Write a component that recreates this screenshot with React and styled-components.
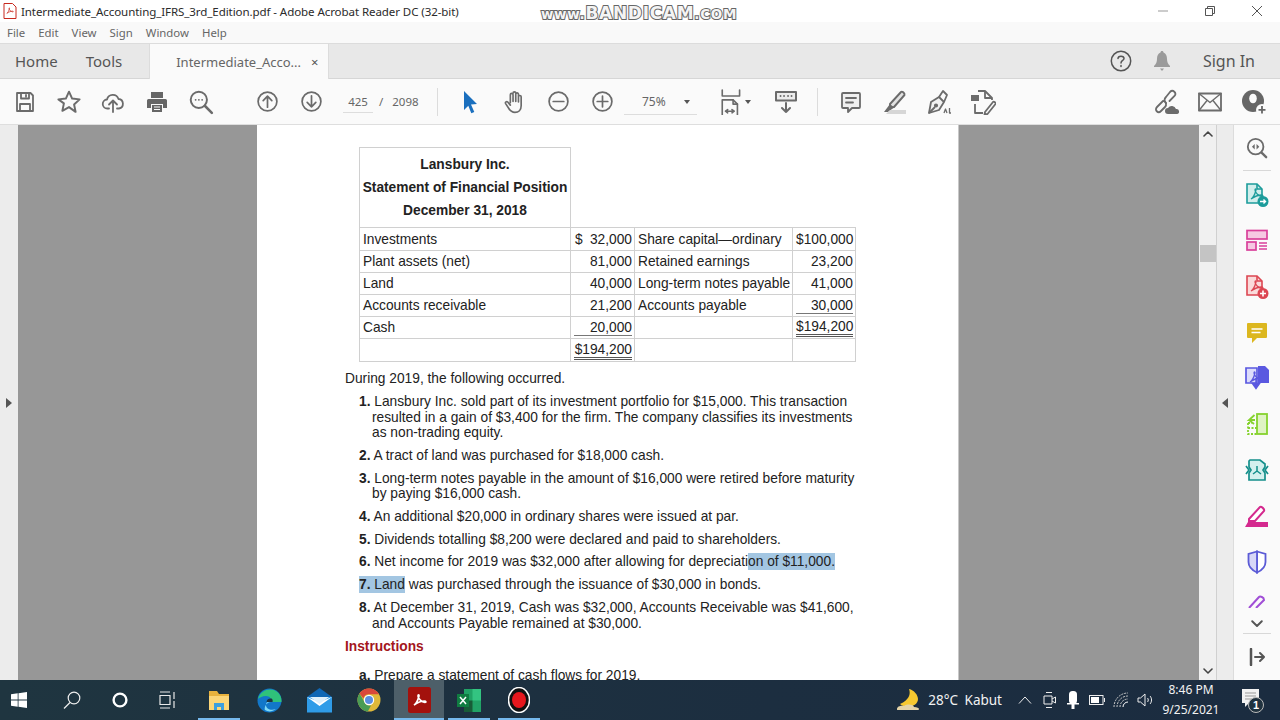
import React from "react";
import styled, { createGlobalStyle } from "styled-components";

const GlobalStyle = createGlobalStyle`
  html, body {
    margin: 0;
    padding: 0;
    background: #fff;
    overflow: hidden;
  }
  * { box-sizing: border-box; }
`;

const uiFont = `"Noto Sans", "Open Sans", sans-serif`;
const gray = "#6b6b6b";

const Window = styled.div`
  width: 1280px;
  height: 720px;
  display: flex;
  flex-direction: column;
  font-family: ${uiFont};
  overflow: hidden;
  position: relative;
`;

/* title bar */
const TitleBar = styled.div`
  height: 22px;
  flex: none;
  display: flex;
  align-items: center;
  padding-left: 3px;
  background: #fff;
  color: #2b2b2b;
  font-size: 11.55px;
`;
const TitleText = styled.span`
  margin-left: 4px;
  flex: 1;
  letter-spacing: -0.09px;
`;
const WinControl = styled.div`
  width: 47px;
  height: 22px;
  display: flex;
  align-items: center;
  justify-content: center;
`;
const Watermark = styled.div`
  position: absolute;
  left: 539px;
  top: 3px;
  width: 200px;
  text-align: center;
  font-family: "DejaVu Sans", sans-serif;
  font-weight: 700;
  font-size: 17px;
  line-height: 20px;
  letter-spacing: 0.7px;
  white-space: nowrap;
  color: #f4f4f4;
  -webkit-text-stroke: 2px #666;
  paint-order: stroke fill;
  small {
    font-size: 13.5px;
  }
`;

/* menu bar */
const MenuBar = styled.div`
  height: 21px;
  flex: none;
  display: flex;
  align-items: center;
  padding-left: 7px;
  gap: 13px;
  background: #f9f9f9;
  color: #666;
  font-size: 11.4px;
`;

/* tab strip */
const TabBar = styled.div`
  height: 36px;
  flex: none;
  display: flex;
  align-items: stretch;
  background: #e8e8e8;
  border-top: 1px solid #dcdcdc;
  border-bottom: 1px solid #d6d6d6;
`;
const NavTab = styled.div`
  display: flex;
  align-items: center;
  font-size: 15px;
  color: #555;
  margin-left: ${(p) => p.$left}px;
`;
const DocTab = styled.div`
  width: 180px;
  margin-left: 27px;
  margin-bottom: -1px;
  padding-left: 26px;
  display: flex;
  align-items: center;
  background: #fafafa;
  border-left: 1px solid #dcdcdc;
  border-right: 1px solid #dcdcdc;
  font-size: 13px;
  color: #666;
`;
const TabClose = styled.span`
  margin-left: 10px;
  font-size: 13px;
  color: #555;
`;
const TabRight = styled.div`
  margin-left: auto;
  display: flex;
  align-items: center;
  padding-right: 25px;
`;
const SignIn = styled.span`
  margin-left: 32px;
  font-size: 16px;
  color: #555;
`;

/* toolbar */
const ToolBar = styled.div`
  height: 46px;
  flex: none;
  display: flex;
  align-items: center;
  padding-left: 3px;
  background: #fafafa;
  border-bottom: 1px solid #dedede;
`;
const ToolSlot = styled.div`
  width: ${(p) => p.$w || 44}px;
  flex: none;
  display: flex;
  align-items: center;
  justify-content: center;
`;
const Gap = styled.div`
  width: ${(p) => p.$w}px;
  flex: none;
`;
const ToolSep = styled.div`
  width: 1px;
  height: 28px;
  flex: none;
  background: #dcdcdc;
`;
const PageBox = styled.div`
  width: 104px;
  flex: none;
  display: flex;
  align-items: center;
  font-size: 11.5px;
  color: #666;
`;
const PageNum = styled.span`
  width: 30px;
  margin-left: 10px;
  padding: 4px 0 3px;
  text-align: center;
  border-bottom: 1px solid #ddd;
`;
const PageTotal = styled.span`
  margin-left: 6px;
  word-spacing: 6px;
`;
const ZoomBox = styled.div`
  width: 73px;
  flex: none;
  display: flex;
  align-items: center;
  justify-content: space-between;
  padding: 4px 7px 4px 18px;
  margin-top: 1px;
  font-size: 12px;
  color: #666;
  border-bottom: 1px solid #ddd;
`;
const Caret = styled.span`
  width: 0;
  height: 0;
  border-left: 3.5px solid transparent;
  border-right: 3.5px solid transparent;
  border-top: 4px solid #555;
`;
const ToolRight = styled.div`
  margin-left: auto;
  display: flex;
  padding-right: 4px;
`;

/* main area */
const Main = styled.div`
  flex: 1;
  min-height: 0;
  display: flex;
  overflow: hidden;
`;
const SideStrip = styled.div`
  width: ${(p) => p.$w}px;
  flex: none;
  display: flex;
  align-items: center;
  justify-content: center;
  background: #ececec;
  border-left: ${(p) => (p.$edge ? "1px solid #d0d0d0" : "none")};
`;
const Arrow = styled.span`
  width: 0;
  height: 0;
  border-top: 5px solid transparent;
  border-bottom: 5px solid transparent;
  ${(p) =>
    p.$dir === "right"
      ? "border-left: 6px solid #555;"
      : "border-right: 6px solid #555;"}
`;
const Canvas = styled.div`
  flex: 1;
  display: flex;
  justify-content: center;
  background: #979797;
  padding-right: 2px;
`;
const Page = styled.div`
  width: 701px;
  background: #fff;
  padding: 22px 0 0 88px;
  font-family: "Liberation Sans", Arial, sans-serif;
  font-size: 13.75px;
  color: #222;
  box-shadow: 1px 0 0 #c8c8c8;
`;

const SheetTable = styled.table`
  margin-left: 14px;
  width: 496px;
  table-layout: fixed;
  border-collapse: collapse;
`;
const Td = styled.td`
  height: ${(p) => (p.$tall ? 23 : 22)}px;
  padding: 0 2px 0 3px;
  border: 1.5px solid #d0d0d0;
  text-align: ${(p) => (p.$num ? "right" : "left")};
  white-space: nowrap;
`;
const HeadCell = styled.td`
  height: 80px;
  padding: 0;
  border: 1.5px solid #d0d0d0;
  text-align: center;
  font-weight: 700;
  line-height: 23px;
  white-space: nowrap;
`;
const BlankCell = styled.td`
  padding: 0;
`;
const Figure = styled.span`
  display: block;
  line-height: 15px;
  margin-top: 1px;
  border-bottom: ${(p) =>
    p.$rule === "double"
      ? "3px double #555"
      : p.$rule === "single"
      ? "1px solid #777"
      : "none"};
`;
const SpreadFigure = styled.span`
  display: flex;
  justify-content: space-between;
  padding-left: 1px;
`;

const Lead = styled.p`
  margin: 9px 0 7px;
  line-height: 16px;
`;
const Items = styled.ol`
  list-style: none;
  margin: 0;
  padding: 0 0 0 14px;
`;
const Item = styled.li`
  margin-bottom: 7.3px;
  padding-left: 13px;
  text-indent: -13px;
  line-height: 15.5px;
  white-space: nowrap;
  b {
    font-weight: 700;
  }
`;
const Mark = styled.span`
  background: #a3c6e2;
  padding: 1px 0;
`;
const SectionHead = styled.h4`
  margin: 8px 0 13px;
  font-size: 13.75px;
  line-height: 16px;
  font-weight: 700;
  color: #a3161c;
`;

/* scrollbar */
const Scrollbar = styled.div`
  width: 17px;
  flex: none;
  display: flex;
  flex-direction: column;
  align-items: center;
  background: #f0f0f0;
  padding: 5px 0;
`;
const Thumb = styled.div`
  width: 16px;
  height: 17px;
  margin-top: 108px;
  background: #c4c4c4;
`;
const ScrollEnd = styled.div`
  margin-top: auto;
  display: flex;
`;

/* right hand tools */
const ToolsPane = styled.div`
  width: 47px;
  flex: none;
  display: flex;
  flex-direction: column;
  align-items: center;
  padding-top: 12px;
  background: #fafafa;
  border-left: 1px solid #dcdcdc;
`;
const PaneIcon = styled.div`
  height: ${(p) => p.$h || 46}px;
  flex: none;
  display: flex;
  align-items: ${(p) => p.$align || "center"};
  padding-bottom: ${(p) => p.$pad || 0}px;
  overflow: hidden;
`;
const PaneSep = styled.div`
  width: 28px;
  height: 1px;
  flex: none;
  background: #d8d8d8;
  margin: ${(p) => p.$m};
`;

/* taskbar */
const Taskbar = styled.div`
  height: 40px;
  flex: none;
  display: flex;
  align-items: stretch;
  background: linear-gradient(90deg, #1f3540, #1c2e40 60%, #1b2c40);
  color: #f2f2f2;
`;
const TaskSlot = styled.div`
  width: ${(p) => p.$w || 50}px;
  flex: none;
  display: flex;
  align-items: center;
  justify-content: center;
  position: relative;
  background: ${(p) => (p.$active ? "#4d5f69" : "transparent")};
  &::after {
    content: "";
    display: ${(p) => (p.$running ? "block" : "none")};
    position: absolute;
    left: ${(p) => (p.$active ? 0 : 4)}px;
    right: ${(p) => (p.$active ? 0 : 4)}px;
    bottom: 0;
    height: 2px;
    background: #76b9ed;
  }
`;
const Tray = styled.div`
  margin-left: auto;
  display: flex;
  align-items: center;
`;
const Weather = styled.span`
  margin: 0 11px 0 8px;
  font-size: 13.5px;
  word-spacing: 3px;
`;
const TrayIcon = styled.div`
  width: 24px;
  display: flex;
  justify-content: center;
`;
const Clock = styled.div`
  width: 68px;
  text-align: center;
  font-size: 12px;
  line-height: 20px;
`;
const Notify = styled.div`
  width: 55px;
  display: flex;
  justify-content: center;
`;

/* icons */
const Svg = ({ s = 24, w, h, vb = "0 0 24 24", children, stroke = gray, sw = 1.8, fill = "none" }) => (
  <svg
    width={w || s}
    height={h || s}
    viewBox={vb}
    fill={fill}
    stroke={stroke}
    strokeWidth={sw}
    strokeLinecap="round"
    strokeLinejoin="round"
  >
    {children}
  </svg>
);

const PdfGlyph = ({ color = "#c8281e", sw = 1.3 }) => (
  <path
    d="M6 17c2-1 4-5 5-9 .2-1.500-1-1.500-1 0 0 3 4 6 7 6.500 1.500 0 1-1.500-.5-1.500-3 0-7 1.500-10.500 4z"
    stroke={color}
    strokeWidth={sw}
    fill="none"
  />
);

const AppIcon = () => (
  <svg width="14" height="16" viewBox="0 0 14 16">
    <path d="M1 .5h8.500L13 4v11.500H1z" fill="#fff" stroke="#c8281e" />
    <g transform="translate(0.500 1) scale(.55)">
      <PdfGlyph />
    </g>
  </svg>
);

const SaveIcon = () => (
  <Svg>
    <path d="M4 3h13.500L20 5.500V21H4z" />
    <path d="M8 3v5.500h8V3M13 5v1.500M7 21v-7h10v7" />
  </Svg>
);
const StarIcon = () => (
  <Svg s={26}>
    <path d="M12 2.500l2.900 6.300 6.900.8-5.100 4.700 1.400 6.800L12 16.700l-6.100 3.400 1.400-6.800L2.200 9.600l6.900-.8z" />
  </Svg>
);
const CloudIcon = () => (
  <Svg>
    <path d="M8 18.500H6.500A4.500 4.500 0 0 1 6 9.500 6 6 0 0 1 17.500 9 4.800 4.800 0 0 1 18 18.500h-2" />
    <path d="M12 22v-11M8 14.500l4-4 4 4" />
  </Svg>
);
const PrintIcon = () => (
  <svg width="24" height="24" viewBox="0 0 24 24" fill="#666">
    <path d="M6 2h12v6H6zM3.500 9h17A1.500 1.500 0 0 1 22 10.500V18h-4v-4H6v4H2v-7.500A1.500 1.500 0 0 1 3.500 9z" />
    <path d="M7 15h10v7H7z" />
    <path d="M9 17h6M9 19.500h6" stroke="#fafafa" strokeWidth="1" />
  </svg>
);
const FindIcon = () => (
  <Svg s={26}>
    <circle cx="10" cy="10" r="7.500" />
    <path d="M15.500 15.500l6.500 6.500" strokeWidth="2.400" />
    <path d="M7 10h.1M10 10h.1M13 10h.1" strokeWidth="1.600" />
  </Svg>
);
const CircleArrow = ({ up }) => (
  <Svg s={23}>
    <circle cx="12" cy="12" r="9.800" />
    <path d={up ? "M12 18V6.500M7.500 11L12 6.500l4.500 4.500" : "M12 6v11.500M7.500 13l4.500 4.500 4.500-4.500"} />
  </Svg>
);
const CursorIcon = () => (
  <svg width="24" height="26" viewBox="0 0 24 26" fill="#1a6fbe">
    <path d="M6 2l13 13-6 .6 3.300 7.400-3 1.300-3-7.500L6 21z" />
  </svg>
);
const HandIcon = () => (
  <Svg s={25} sw={1.6}>
    <path d="M8 13V5.500a1.300 1.300 0 0 1 2.600 0V12m0-8a1.300 1.300 0 0 1 2.600 0v8m0-7a1.300 1.300 0 0 1 2.600 0v7.500m0-5a1.300 1.300 0 0 1 2.600 0V16c0 4-2.500 6.500-6 6.500-3 0-4.500-1.500-6-4L3.500 14c-.8-1.500 1-2.500 2-1.500L8 15.500" />
  </Svg>
);
const CircleSign = ({ plus }) => (
  <Svg s={23}>
    <circle cx="12" cy="12" r="9.800" />
    <path d={plus ? "M6.500 12h11M12 6.500v11" : "M6.500 12h11"} />
  </Svg>
);
const FitIcon = () => (
  <Svg s={26} sw={1.5}>
    <path d="M3 1v5.500h16V1" />
    <path d="M3 24v-14h10l4 4v10" />
    <path d="M13 10v4h4M6 20.500h8M6 20.500l2-1.500M6 20.500L8 22M14 20.500L12 19M14 20.500L12 22" />
  </Svg>
);
const ReadIcon = () => (
  <svg width="22" height="22" viewBox="0 0 22 22" fill="none" stroke={gray} strokeLinecap="round" strokeLinejoin="round">
    <rect x="1" y="1" width="20" height="8.500" fill="#ececec" strokeWidth="2" />
    <path d="M5.500 5h.1M9 5h.1M13 5h.1M16.500 5h.1" strokeWidth="1.800" />
    <path d="M11 12v9M7 17l4 4 4-4" strokeWidth="2" />
  </svg>
);
const CommentIcon = () => (
  <Svg>
    <path d="M4 3h16a1 1 0 0 1 1 1v13a1 1 0 0 1-1 1h-7l-4 4v-4H4a1 1 0 0 1-1-1V4a1 1 0 0 1 1-1z" fill="#f0f0f0" />
    <path d="M7 8h10M7 12.500h7" />
  </Svg>
);
const HighlightIcon = () => (
  <svg width="26" height="26" viewBox="0 0 26 26" fill="none">
    <path d="M8 15L19 3c1-1 4 1 3.500 3L12 18l-4 .5z" fill="#e2e2e2" stroke={gray} strokeWidth="1.900" strokeLinejoin="round" />
    <path d="M8 15l4 3.500L6 23H2z" fill={gray} />
    <path d="M8 21h16v4H4z" fill="#d6d6d6" />
  </svg>
);
const SignIcon = () => (
  <svg width="26" height="26" viewBox="0 0 26 26" fill="none" stroke={gray} strokeWidth="1.800" strokeLinejoin="round">
    <path d="M3 24l2-11 8-5 5 5-5 8z" fill="#f2f2f2" />
    <path d="M3 24l6-6M13 8l4-6 4 4-3 7" />
    <circle cx="10" cy="16.500" r="1.200" fill={gray} />
    <path d="M18 24l1.500-4 1.500 4M23.500 19v5h1.500" strokeWidth="1.300" />
  </svg>
);
const EditDocIcon = () => (
  <svg width="26" height="26" viewBox="0 0 26 26" fill="none" stroke={gray} strokeWidth="1.800" strokeLinejoin="round">
    <path d="M8 2h7l7 7v2M5 15v9h8" />
    <path d="M15 2v7h7" />
    <path d="M1 6h8v6H1z" fill={gray} stroke="none" />
    <path d="M15 23l8-10c1-1 3 1 2.500 2L17.500 25l-3 .5z" />
  </svg>
);
const LinkCloudIcon = () => (
  <svg width="27" height="26" viewBox="0 0 27 26" fill="none" stroke={gray} strokeWidth="1.800" strokeLinecap="round">
    <path d="M10 12l-6 6c-3 3 1 7 4 4l4-4c2-2 1-5-1-6" />
    <path d="M13 14c-2-2-2-4 0-6l4-5c3-3 7 1 4.500 4l-5 5" />
    <path d="M15 25a3 3 0 0 1 0-6 4.500 4.500 0 0 1 8 1 2.500 2.500 0 0 1 1 5z" fill={gray} stroke="none" />
  </svg>
);
const MailIcon = () => (
  <Svg w={24} h={20} vb="0 0 24 20" sw={1.8}>
    <rect x="1" y="1.500" width="22" height="17" />
    <path d="M1 1.500l11 9 11-9M1 18.500l8-10M23 18.500l-8-10" strokeWidth="1.400" />
  </Svg>
);
const AddUserIcon = () => (
  <svg width="26" height="26" viewBox="0 0 26 26" fill="none">
    <circle cx="12" cy="12" r="11" fill="#666" />
    <ellipse cx="12" cy="9.500" rx="3.800" ry="4.800" fill="#fafafa" />
    <circle cx="21" cy="21" r="6" fill="#fafafa" />
    <path d="M21 17v7.500M17.500 20.800h7" stroke="#666" strokeWidth="1.800" />
  </svg>
);
const HelpIcon = () => (
  <svg width="22" height="22" viewBox="0 0 22 22" fill="none" stroke="#555" strokeWidth="1.500">
    <circle cx="11" cy="11" r="9.700" />
    <path d="M8 8.500C8 5.500 14 5.500 14 8.500c0 2-3 2-3 4.500M11 15.500v1" strokeLinecap="round" />
  </svg>
);
const BellIcon = () => (
  <svg width="18" height="20" viewBox="0 0 18 20" fill="#9a9a9a">
    <path d="M9 0c1 0 1.500.7 1.500 1.500C13 2.500 14 5 14 8c0 3 1 5 3 7v1H1v-1c2-2 3-4 3-7 0-3 1-5.500 3.500-6.500C7.500.7 8 0 9 0z" />
    <path d="M7 17.500h4L9 20z" />
  </svg>
);

const Chevron = ({ up, s = 10, color = "#444", sw = 1.6 }) => (
  <svg width={s} height={s * 0.7} viewBox="0 0 10 7" fill="none" stroke={color} strokeWidth={sw} strokeLinecap="round" strokeLinejoin="round">
    <path d={up ? "M1 6l4-4 4 4" : "M1 1l4 4 4-4"} />
  </svg>
);

const PaneFind = () => (
  <Svg sw={2}>
    <circle cx="10.500" cy="10.500" r="8.500" />
    <path d="M17 17l5 5" strokeWidth="2.500" />
    <path d="M9.500 7.500l-3 3 3 3zM11.500 7.500l3 3-3 3z" fill={gray} stroke="none" />
  </Svg>
);
const CreateIcon = () => (
  <svg width="24" height="26" viewBox="0 0 24 26" fill="none">
    <path d="M2 2h10l5 5v14H2z" fill="#d2eeec" stroke="#1c9c9b" strokeWidth="1.600" />
    <path d="M12 2v5h5" stroke="#1c9c9b" strokeWidth="1.600" />
    <PdfGlyph color="#1c9c9b" />
    <circle cx="18" cy="19.500" r="5.500" fill="#1c9c9b" />
    <path d="M15 19.500h5.500M18.500 17.500l2 2-2 2" stroke="#fff" strokeWidth="1.400" />
  </svg>
);
const OrganizeIcon = () => (
  <svg width="24" height="24" viewBox="0 0 24 24" fill="none" stroke="#d9409a" strokeWidth="1.700">
    <rect x="2" y="2.500" width="20" height="8.500" fill="#f6c8e2" />
    <rect x="2" y="14" width="9" height="8" fill="#f6c8e2" />
    <path d="M14 15h8M14 18h8M14 21h8" strokeWidth="1.300" />
  </svg>
);
const CombineIcon = () => (
  <svg width="24" height="26" viewBox="0 0 24 26" fill="none">
    <path d="M2 2h10l5 5v14H2z" fill="#fadada" stroke="#dc4652" strokeWidth="1.600" />
    <path d="M12 2v5h5" stroke="#dc4652" strokeWidth="1.600" />
    <PdfGlyph color="#dc4652" />
    <circle cx="18" cy="19.500" r="5.500" fill="#dc4652" />
    <path d="M15 19.500h6M18 16.500v6" stroke="#fff" strokeWidth="1.600" />
  </svg>
);
const PaneComment = () => (
  <svg width="22" height="22" viewBox="0 0 22 22">
    <path d="M2 1h18a1 1 0 0 1 1 1v13a1 1 0 0 1-1 1H11l-5 5v-5H2a1 1 0 0 1-1-1V2a1 1 0 0 1 1-1z" fill="#dcb71f" />
    <path d="M5.500 7h11M5.500 10.500h9" stroke="#fff" strokeWidth="1.500" />
  </svg>
);
const ExportIcon = () => (
  <svg width="26" height="26" viewBox="0 0 26 26" fill="none">
    <path d="M2 3h11v15H2z" fill="#dcdcfb" stroke="#5a58e0" strokeWidth="1.700" />
    <PdfGlyph color="#5a58e0" />
    <path d="M14 1h7l4 4v13H14z" fill="#5a58e0" />
    <path d="M12 13v8M8.500 18.500l3.500 5 3.500-5z" fill="#5a58e0" stroke="#5a58e0" strokeWidth="1.500" />
  </svg>
);
const CompareIcon = () => (
  <svg width="24" height="24" viewBox="0 0 24 24" fill="none" stroke="#86d22e" strokeWidth="1.800">
    <rect x="12" y="2" width="10" height="20" fill="#dff3c4" />
    <path d="M3 11v11h9M3 16h9M3 11h4" strokeDasharray="2 1.500" />
    <path d="M9.500 3L4 8h6M4 8l5 4" strokeWidth="1.800" />
  </svg>
);
const CompressIcon = () => (
  <svg width="26" height="24" viewBox="0 0 26 24" fill="none" stroke="#148f8b" strokeWidth="1.700">
    <path d="M6 2h10l5 4v3l-2 3 2 3v7H5v-7l2-3-2-3V3z" fill="#d3f0ee" />
    <path d="M2 8l3 4-3 4M24 8l-3 4 3 4" />
    <path d="M13 8v5M13 13l-4 3M13 13l4 3" strokeWidth="1.500" />
  </svg>
);
const RedactIcon = () => (
  <svg width="24" height="22" viewBox="0 0 24 22" fill="none">
    <path d="M4 14L15 2c1-1 5 2 4 4L10 16H4z" fill="#fff" stroke="#d4298e" strokeWidth="2" />
    <path d="M3 17h20v5H0z" fill="#d4298e" />
  </svg>
);
const ShieldIcon = () => (
  <svg width="20" height="24" viewBox="0 0 20 24">
    <path d="M10 1.500L18.500 4v8c0 5-4 8.500-8.500 10.500z" fill="#fff" stroke="#5b5bd6" strokeWidth="1.800" />
    <path d="M10 1.500L1.500 4v8c0 5 4 8.500 8.500 10.500z" fill="#d7d7f7" stroke="#5b5bd6" strokeWidth="1.800" />
  </svg>
);
const PurplePen = () => (
  <svg width="18" height="14" viewBox="0 0 18 14" fill="none" stroke="#a04ed6" strokeWidth="2">
    <path d="M1 14L11 3c1-1 5 0 5 3L8 14" />
  </svg>
);
const CollapseIcon = () => (
  <svg width="16" height="18" viewBox="0 0 16 18" fill="none" stroke="#555" strokeWidth="2" strokeLinecap="round">
    <path d="M2 1v16" strokeWidth="2.500" />
    <path d="M6 9h9M11 5l4 4-4 4" />
  </svg>
);

const StartIcon = () => (
  <svg width="16" height="16" viewBox="0 0 16 16" fill="#fff">
    <path d="M0 2.300L6.700 1.300V7.600H0zM7.500 1.200L16 0V7.600H7.500zM0 8.400H6.700V14.700L0 13.700zM7.500 8.400H16V16L7.500 14.800z" />
  </svg>
);
const SearchIcon = () => (
  <svg width="18" height="18" viewBox="0 0 18 18" fill="none" stroke="#eee" strokeWidth="1.200">
    <circle cx="11" cy="7" r="5.800" />
    <path d="M7 11.500L1 17.500" />
  </svg>
);
const CortanaIcon = () => (
  <svg width="16" height="16" viewBox="0 0 16 16" fill="none" stroke="#fff" strokeWidth="2.400">
    <circle cx="8" cy="8" r="6.400" />
  </svg>
);
const TaskViewIcon = () => (
  <svg width="18" height="18" viewBox="0 0 18 18" fill="none" stroke="#e8e8e8" strokeWidth="1.200">
    <path d="M1 1h10M1 17h10M1 4.500h10v9H1zM15 1v7M15 10v7" />
  </svg>
);
const ExplorerIcon = () => (
  <svg width="22" height="21" viewBox="0 0 22 21">
    <path d="M1 1h8l2 3h10v16H1z" fill="#e8b23d" />
    <path d="M1 6h20v14H1z" fill="#fcd678" />
    <path d="M6 20v-7h10v7h-3v-3H9v3z" fill="#3c9fdf" />
  </svg>
);
const EdgeIcon = () => (
  <svg width="25" height="25" viewBox="0 0 25 25">
    <circle cx="12.500" cy="12.500" r="12" fill="#1277c9" />
    <path d="M1 11C3 3 11 0 17 2c5 2 8 7 7.500 12H14c1-3-1-6-5-6-4 0-7 2-8 3z" fill="#2fc27a" />
    <path d="M15 14c-3 0-6-1-6 3 0 4 5 6 10 4-4 3-8 3-11 1-1-1 .5-9 7-8z" fill="#7fd9f6" />
    <path d="M9.500 14c0-2 2-4 5-3.500 1 .5 1.500 2 1 3.500z" fill="#1f3540" />
  </svg>
);
const MailAppIcon = () => (
  <svg width="25" height="25" viewBox="0 0 25 25">
    <path d="M12.500 0L25 9v15H0V9z" fill="#0f67b5" />
    <path d="M0 9h25v15.500H0z" fill="#2f9ce8" />
    <path d="M0 9l12.500 9L25 9v0L12.500 14z" fill="#fff" />
    <path d="M3 9L12.500 16 22 9z" fill="#dff0fb" />
  </svg>
);
const ChromeIcon = () => (
  <svg width="24" height="24" viewBox="0 0 24 24">
    <circle cx="12" cy="12" r="11.500" fill="#e0b93a" />
    <path d="M12 .5a11.500 11.500 0 0 1 10 5.800H12a5.700 5.700 0 0 0-5.600 4.300L2.500 5.500A11.500 11.500 0 0 1 12 .5z" fill="#d9483b" />
    <path d="M2.500 5.500l5 8.500a5.700 5.700 0 0 0 6.500 3.400l-3.200 6.100A11.500 11.500 0 0 1 2.500 5.500z" fill="#4a9c55" />
    <circle cx="12" cy="12" r="5.200" fill="#fff" />
    <circle cx="12" cy="12" r="4" fill="#5b8fe0" />
  </svg>
);
const AcrobatIcon = () => (
  <svg width="23" height="26" viewBox="0 0 23 26">
    <rect width="23" height="26" rx="2.500" fill="#a3110d" />
    <g transform="translate(0 1)">
      <PdfGlyph color="#fff" sw={1.700} />
    </g>
  </svg>
);
const ExcelIcon = () => (
  <svg width="24" height="23" viewBox="0 0 24 23">
    <path d="M7 0h17v23H7z" fill="#21a366" />
    <path d="M15.500 0H24v11.500h-8.500z" fill="#33c481" />
    <path d="M7 11.500h8.500V23H7z" fill="#185c37" />
    <path d="M0 5h12v13H0z" fill="#107c41" />
    <path d="M3 8l6 7M9 8l-6 7" stroke="#fff" strokeWidth="1.500" />
  </svg>
);
const RecordIcon = () => (
  <svg width="22" height="26" viewBox="0 0 22 26">
    <ellipse cx="11" cy="13" rx="10.500" ry="12.500" fill="#111" stroke="#fff" strokeWidth="1.500" />
    <ellipse cx="11" cy="13" rx="7" ry="8" fill="#e6171d" />
  </svg>
);
const MoonIcon = () => (
  <svg width="24" height="24" viewBox="0 0 24 24">
    <path d="M13 1c2 5 0 11-9 15 5 5 18 3 18-5 0-4-4-9-9-10z" fill="#f6c830" />
    <path d="M1 21c0-3 5-4 7-3 3-2 9-2 10 1 3 0 5 1 5 2 0 1-1 1-2 1H2c-1 0-1 0-1-1z" fill="#e5d4a8" />
  </svg>
);
const ChevUpIcon = () => (
  <svg width="14" height="8" viewBox="0 0 14 8" fill="none" stroke="#eee" strokeWidth="1">
    <path d="M1 7.500L7 1l6 6.500" />
  </svg>
);
const MeetIcon = () => (
  <svg width="13" height="16" viewBox="0 0 13 16" fill="none" stroke="#eee" strokeWidth="1">
    <path d="M3 .5h6M3 15.500h6M1 4h8v8H1zM9 7l3.500-2v6L9 9" />
  </svg>
);
const MicIcon = () => (
  <svg width="12" height="18" viewBox="0 0 12 18" fill="#fff">
    <rect x="2" y="0" width="8" height="13" rx="3.500" />
    <path d="M0 12h12v1.500H7.500V18h-3v-4.500H0z" />
  </svg>
);
const BatteryIcon = () => (
  <svg width="16" height="10" viewBox="0 0 16 10" fill="none" stroke="#eee">
    <rect x=".5" y=".5" width="13.500" height="9" />
    <rect x="2" y="2" width="8" height="6" fill="#fff" stroke="none" />
    <path d="M15.500 3v4" />
  </svg>
);
const WifiIcon = () => (
  <svg width="16" height="16" viewBox="0 0 16 16" fill="none" stroke="#ccc" strokeWidth="1">
    <path d="M1 15A14 14 0 0 1 15 1M4 15A11 11 0 0 1 15 4M7 15a8 8 0 0 1 8-8" strokeDasharray="2 1" />
    <path d="M10 15a5 5 0 0 1 5-5" stroke="#fff" />
  </svg>
);
const VolumeIcon = () => (
  <svg width="16" height="14" viewBox="0 0 16 14" fill="none" stroke="#eee" strokeWidth="1">
    <path d="M1 5h2.500L8 1v12L3.500 9H1zM10.500 5c1 1 1 3 0 4M13 3c2 2 2 6 0 8" />
  </svg>
);
const NotifyIcon = () => (
  <svg width="26" height="26" viewBox="0 0 26 26">
    <path d="M2 2h17v14H9l-4 4v-4H2z" fill="#f2f2f2" />
    <path d="M5 6h11M5 9h11M5 12h8" stroke="#999" />
    <circle cx="16" cy="18" r="7.500" fill="#20323f" stroke="#bbb" />
    <text x="16" y="22" fontSize="11" fontWeight="700" fill="#fff" textAnchor="middle" fontFamily="Liberation Sans, sans-serif">1</text>
  </svg>
);

const sheetRows = [
  ["Investments", <SpreadFigure><span>$</span><span>32,000</span></SpreadFigure>, "Share capital—ordinary", "$100,000"],
  ["Plant assets (net)", "81,000", "Retained earnings", "23,200"],
  ["Land", "40,000", "Long-term notes payable", "41,000"],
  ["Accounts receivable", "21,200", "Accounts payable", <Figure $rule="single">30,000</Figure>],
  ["Cash", <Figure $rule="single">20,000</Figure>, "", <Figure $rule="double">$194,200</Figure>],
  ["", <Figure $rule="double">$194,200</Figure>, "", ""],
];

const App = () => {
  return (
    <Window>
      <GlobalStyle />
      <TitleBar>
        <AppIcon />
        <TitleText>Intermediate_Accounting_IFRS_3rd_Edition.pdf - Adobe Acrobat Reader DC (32-bit)</TitleText>
        <WinControl>
          <svg width="10" height="2"><path d="M0 1h10" stroke="#999" /></svg>
        </WinControl>
        <WinControl>
          <svg width="10" height="10" fill="none" stroke="#555"><path d="M.5 2.500h7v7h-7zM2.500 2.500v-2h7v7h-2" /></svg>
        </WinControl>
        <WinControl>
          <svg width="12" height="12" fill="none" stroke="#555"><path d="M1 1l10 10M11 1L1 11" /></svg>
        </WinControl>
      </TitleBar>
      <Watermark><small>www.</small>BANDICAM<small>.COM</small></Watermark>

      <MenuBar>
        <span>File</span>
        <span>Edit</span>
        <span>View</span>
        <span>Sign</span>
        <span>Window</span>
        <span>Help</span>
      </MenuBar>

      <TabBar>
        <NavTab $left={15}>Home</NavTab>
        <NavTab $left={28}>Tools</NavTab>
        <DocTab>
          Intermediate_Acco...
          <TabClose>×</TabClose>
        </DocTab>
        <TabRight>
          <HelpIcon />
          <Gap $w={21} />
          <BellIcon />
          <SignIn>Sign In</SignIn>
        </TabRight>
      </TabBar>

      <ToolBar>
        <ToolSlot><SaveIcon /></ToolSlot>
        <ToolSlot><StarIcon /></ToolSlot>
        <ToolSlot><CloudIcon /></ToolSlot>
        <ToolSlot><PrintIcon /></ToolSlot>
        <ToolSlot><FindIcon /></ToolSlot>
        <Gap $w={22} />
        <ToolSlot><CircleArrow up /></ToolSlot>
        <ToolSlot><CircleArrow /></ToolSlot>
        <PageBox>
          <PageNum>425</PageNum>
          <PageTotal>/ 2098</PageTotal>
        </PageBox>
        <ToolSep />
        <Gap $w={10} />
        <ToolSlot><CursorIcon /></ToolSlot>
        <ToolSlot><HandIcon /></ToolSlot>
        <ToolSlot><CircleSign /></ToolSlot>
        <ToolSlot><CircleSign plus /></ToolSlot>
        <ZoomBox>75%<Caret /></ZoomBox>
        <Gap $w={22} />
        <ToolSlot $w={26}><FitIcon /></ToolSlot>
        <Caret />
        <Gap $w={19} />
        <ToolSlot $w={32}><ReadIcon /></ToolSlot>
        <Gap $w={15} />
        <ToolSep />
        <Gap $w={11} />
        <ToolSlot><CommentIcon /></ToolSlot>
        <ToolSlot><HighlightIcon /></ToolSlot>
        <ToolSlot><SignIcon /></ToolSlot>
        <ToolSlot><EditDocIcon /></ToolSlot>
        <ToolRight>
          <ToolSlot><LinkCloudIcon /></ToolSlot>
          <ToolSlot><MailIcon /></ToolSlot>
          <ToolSlot><AddUserIcon /></ToolSlot>
        </ToolRight>
      </ToolBar>

      <Main>
        <SideStrip $w={18}><Arrow $dir="right" /></SideStrip>
        <Canvas>
          <Page>
            <SheetTable>
              <colgroup>
                <col width="211" />
                <col width="64" />
                <col width="158" />
                <col width="63" />
              </colgroup>
              <tbody>
                <tr>
                  <HeadCell>
                    Lansbury Inc.<br />
                    Statement of Financial Position<br />
                    December 31, 2018
                  </HeadCell>
                  <BlankCell />
                  <BlankCell />
                  <BlankCell />
                </tr>
                {sheetRows.map((row, i) => {
                  const tall = i === 0 || i === sheetRows.length - 1;
                  return (
                    <tr key={i}>
                      <Td $tall={tall}>{row[0]}</Td>
                      <Td $tall={tall} $num>{row[1]}</Td>
                      <Td $tall={tall}>{row[2]}</Td>
                      <Td $tall={tall} $num>{row[3]}</Td>
                    </tr>
                  );
                })}
              </tbody>
            </SheetTable>

            <Lead>During 2019, the following occurred.</Lead>
            <Items>
              <Item>
                <b>1.</b> Lansbury Inc. sold part of its investment portfolio for $15,000. This transaction<br />
                resulted in a gain of $3,400 for the firm. The company classifies its investments<br />
                as non-trading equity.
              </Item>
              <Item><b>2.</b> A tract of land was purchased for $18,000 cash.</Item>
              <Item>
                <b>3.</b> Long-term notes payable in the amount of $16,000 were retired before maturity<br />
                by paying $16,000 cash.
              </Item>
              <Item><b>4.</b> An additional $20,000 in ordinary shares were issued at par.</Item>
              <Item><b>5.</b> Dividends totalling $8,200 were declared and paid to shareholders.</Item>
              <Item><b>6.</b> Net income for 2019 was $32,000 after allowing for depreciati<Mark>on of $11,000.</Mark></Item>
              <Item><Mark><b>7.</b> Land</Mark> was purchased through the issuance of $30,000 in bonds.</Item>
              <Item>
                <b>8.</b> At December 31, 2019, Cash was $32,000, Accounts Receivable was $41,600,<br />
                and Accounts Payable remained at $30,000.
              </Item>
            </Items>
            <SectionHead>Instructions</SectionHead>
            <Items>
              <Item><b>a.</b> Prepare a statement of cash flows for 2019.</Item>
            </Items>
          </Page>
        </Canvas>
        <Scrollbar>
          <Chevron up />
          <Thumb />
          <ScrollEnd><Chevron /></ScrollEnd>
        </Scrollbar>
        <SideStrip $w={17} $edge><Arrow $dir="left" /></SideStrip>
        <ToolsPane>
          <PaneFind />
          <PaneSep $m="11px 0 2px" />
          <PaneIcon $h={44}><CreateIcon /></PaneIcon>
          <PaneIcon $h={46}><OrganizeIcon /></PaneIcon>
          <PaneIcon $h={47}><CombineIcon /></PaneIcon>
          <PaneIcon $h={45}><PaneComment /></PaneIcon>
          <PaneIcon $h={46}><ExportIcon /></PaneIcon>
          <PaneIcon $h={46}><CompareIcon /></PaneIcon>
          <PaneIcon $h={46}><CompressIcon /></PaneIcon>
          <PaneIcon $h={46}><RedactIcon /></PaneIcon>
          <PaneIcon $h={46}><ShieldIcon /></PaneIcon>
          <PaneIcon $h={30} $align="flex-end" $pad={7}><PurplePen /></PaneIcon>
          <PaneIcon $h={18}><Chevron s={12} color="#555" /></PaneIcon>
          <PaneSep $m="0" />
          <PaneIcon $h={46}><CollapseIcon /></PaneIcon>
        </ToolsPane>
      </Main>

      <Taskbar>
        <TaskSlot $w={38}><StartIcon /></TaskSlot>
        <TaskSlot $w={10} />
        <TaskSlot $w={48}><SearchIcon /></TaskSlot>
        <TaskSlot $w={48}><CortanaIcon /></TaskSlot>
        <TaskSlot $w={48}><TaskViewIcon /></TaskSlot>
        <TaskSlot $w={2} />
        <TaskSlot $running><ExplorerIcon /></TaskSlot>
        <TaskSlot><EdgeIcon /></TaskSlot>
        <TaskSlot><MailAppIcon /></TaskSlot>
        <TaskSlot><ChromeIcon /></TaskSlot>
        <TaskSlot $active $running><AcrobatIcon /></TaskSlot>
        <TaskSlot $running><ExcelIcon /></TaskSlot>
        <TaskSlot $running><RecordIcon /></TaskSlot>
        <Tray>
          <MoonIcon />
          <Weather>28°C Kabut</Weather>
          <TrayIcon><ChevUpIcon /></TrayIcon>
          <TrayIcon><MeetIcon /></TrayIcon>
          <TrayIcon><MicIcon /></TrayIcon>
          <TrayIcon><BatteryIcon /></TrayIcon>
          <TrayIcon><WifiIcon /></TrayIcon>
          <TrayIcon><VolumeIcon /></TrayIcon>
          <Clock>
            8:46 PM<br />
            9/25/2021
          </Clock>
          <Notify><NotifyIcon /></Notify>
        </Tray>
      </Taskbar>
    </Window>
  );
};

export default App;
